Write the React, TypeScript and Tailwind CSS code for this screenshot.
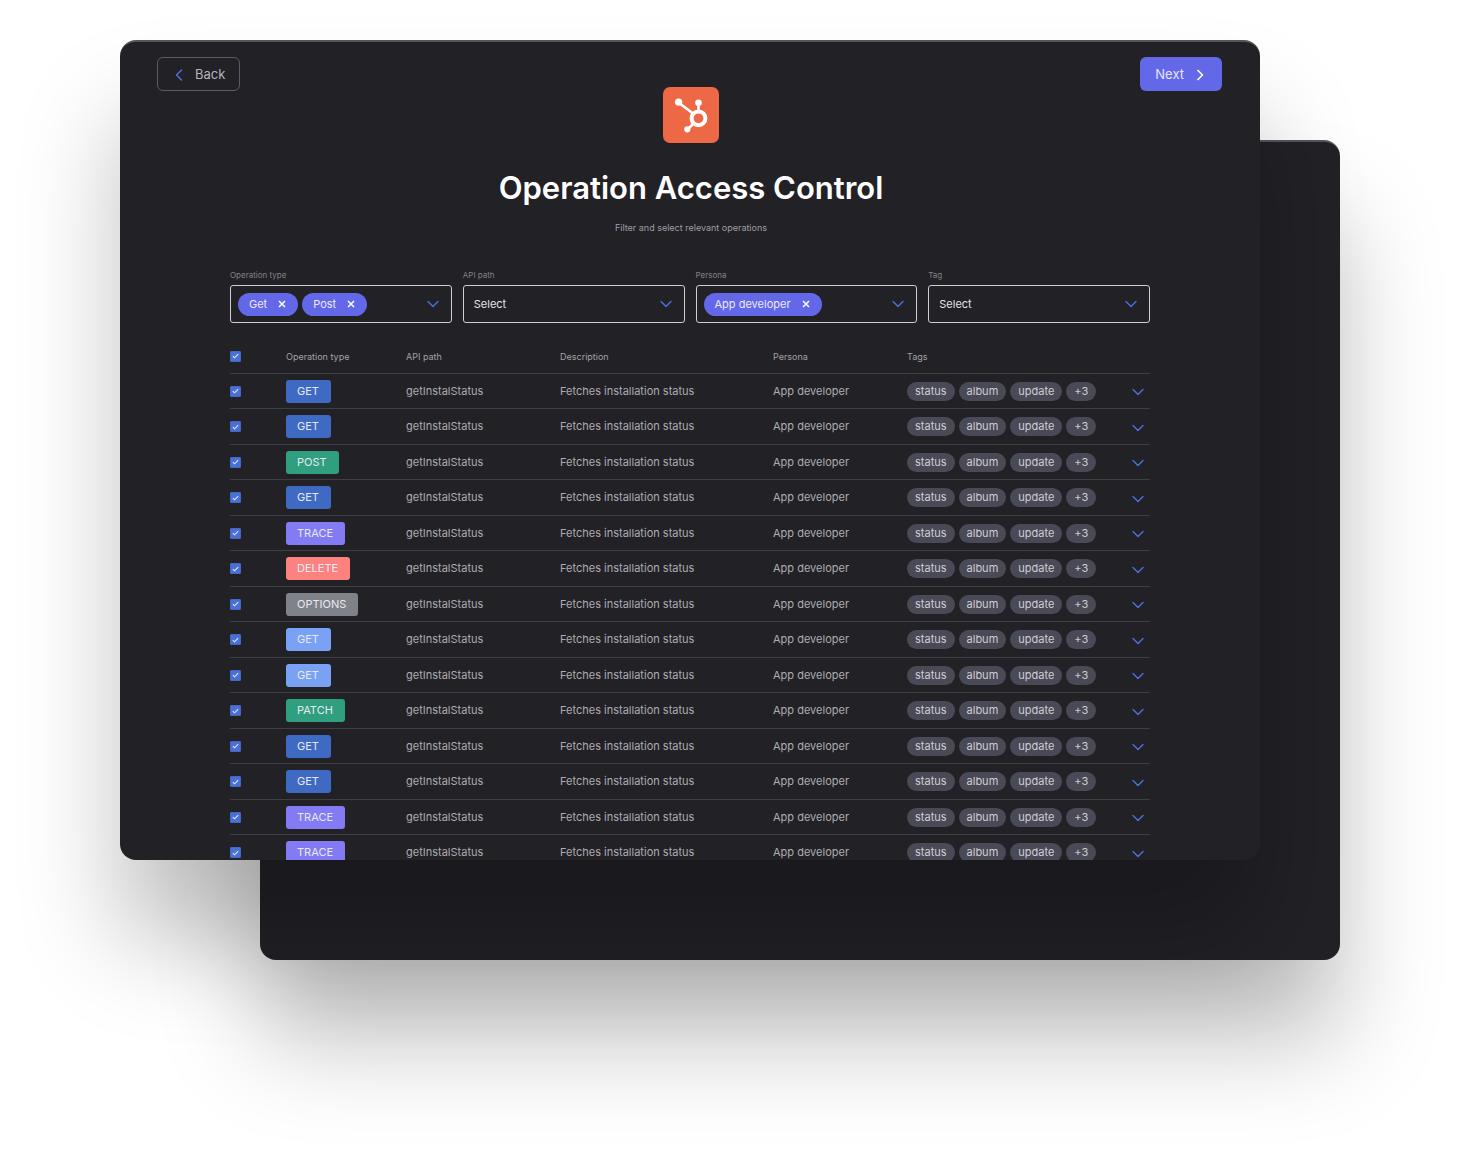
import React, { useState } from "react";

type Method = "GET" | "POST" | "TRACE" | "DELETE" | "OPTIONS" | "PATCH";

const OPERATIONS: { method: Method; tone: string }[] = [
  { method: "GET", tone: "bg-[#3e6ac4]" },
  { method: "GET", tone: "bg-[#3e6ac4]" },
  { method: "POST", tone: "bg-[#2f9f80]" },
  { method: "GET", tone: "bg-[#3e6ac4]" },
  { method: "TRACE", tone: "bg-[#837bf3]" },
  { method: "DELETE", tone: "bg-[#fb827f]" },
  { method: "OPTIONS", tone: "bg-[#808289]" },
  { method: "GET", tone: "bg-[#7aa2f4]" },
  { method: "GET", tone: "bg-[#7aa2f4]" },
  { method: "PATCH", tone: "bg-[#2f9f80]" },
  { method: "GET", tone: "bg-[#3e6ac4]" },
  { method: "GET", tone: "bg-[#3e6ac4]" },
  { method: "TRACE", tone: "bg-[#837bf3]" },
  { method: "TRACE", tone: "bg-[#837bf3]" },
];

const TAGS = ["status", "album", "update", "+3"];

function ChevronDown() {
  return (
    <svg width="12" height="8" viewBox="0 0 12 8" fill="none" stroke="#4a72dc" strokeWidth="1.4" strokeLinecap="round" strokeLinejoin="round" aria-hidden="true">
      <path d="M1 1.5 6 6.5 11 1.5" />
    </svg>
  );
}

function Checkbox({ label, checked, onChange }: { label: string; checked: boolean; onChange: () => void }) {
  return (
    <label className="grid size-[11px] cursor-pointer place-items-center">
      <input
        type="checkbox"
        aria-label={label}
        checked={checked}
        onChange={onChange}
        className="peer col-start-1 row-start-1 size-[11px] appearance-none rounded-[1px] border border-[#4467c4] checked:bg-[#4a70d6]"
      />
      <svg className="pointer-events-none invisible col-start-1 row-start-1 peer-checked:visible" width="7" height="6" viewBox="0 0 7 6" fill="none" stroke="#dfe5fa" strokeWidth="1.1" aria-hidden="true">
        <path d="M0.8 3.1 2.6 4.8 6.2 1.1" />
      </svg>
    </label>
  );
}

function Chip({ text, onRemove }: { text: string; onRemove: () => void }) {
  return (
    <span className="flex h-[23px] items-center gap-[11px] rounded-full bg-[#6268e8] pr-3 pl-[11px] text-[11px] text-[#eceaff]">
      {text}
      <button type="button" aria-label={`Remove ${text}`} onClick={onRemove}>
        <svg width="8" height="8" viewBox="0 0 8 8" stroke="#ffffff" strokeWidth="1.5" aria-hidden="true">
          <path d="M1 1 7 7M7 1 1 7" />
        </svg>
      </button>
    </span>
  );
}

function ChipField({ id, label, initial }: { id: string; label: string; initial: string[] }) {
  const [values, setValues] = useState(initial);
  return (
    <div role="group" aria-labelledby={id}>
      <div id={id} className="text-[8px] leading-[10px] text-[#83828b]">
        {label}
      </div>
      <div className="mt-[5px] flex h-[38px] items-center gap-1 rounded-[3px] border border-[#cfced6] pr-3 pl-[7px]">
        {values.map((v) => (
          <Chip key={v} text={v} onRemove={() => setValues(values.filter((x) => x !== v))} />
        ))}
        <button type="button" aria-label={`Open ${label}`} className="ml-auto">
          <ChevronDown />
        </button>
      </div>
    </div>
  );
}

function SelectField({ id, label }: { id: string; label: string }) {
  return (
    <div>
      <label htmlFor={id} className="block text-[8px] leading-[10px] text-[#83828b]">
        {label}
      </label>
      <div className="mt-[5px] grid items-center">
        <select
          id={id}
          className="col-start-1 row-start-1 h-[38px] w-full appearance-none rounded-[3px] border border-[#cfced6] bg-transparent px-2.5 text-[11px] text-[#e4e3e8]"
        >
          <option>Select</option>
        </select>
        <span className="pointer-events-none col-start-1 row-start-1 mr-[13px] justify-self-end">
          <ChevronDown />
        </span>
      </div>
    </div>
  );
}

function HubLogo() {
  return (
    <svg width="56" height="56" viewBox="0 0 56 56" role="img" aria-label="HubSpot">
      <rect width="56" height="56" rx="7" fill="#ed6945" />
      <g stroke="#ffffff" fill="none">
        <circle cx="35.5" cy="31.3" r="6.9" strokeWidth="4" />
        <path d="M35.5 24V16" strokeWidth="2.6" />
        <path d="M30 26.5 15.5 15.5" strokeWidth="2.6" />
        <path d="M30.5 36.5 25 42" strokeWidth="2.6" />
      </g>
      <g fill="#ffffff">
        <circle cx="15.6" cy="15.1" r="3.7" />
        <circle cx="35.5" cy="15.8" r="3.3" />
        <circle cx="24.3" cy="42.3" r="3.1" />
      </g>
    </svg>
  );
}

export default function App() {
  const [selected, setSelected] = useState<boolean[]>(OPERATIONS.map(() => true));
  const all = selected.every(Boolean);

  return (
    <div className="min-h-screen overflow-hidden bg-white px-[120px] pt-10 pb-[200px] font-['Inter',sans-serif]">
      <div className="grid grid-cols-[140px_minmax(0,1fr)_80px] grid-rows-[100px_720px_100px]">
        <div className="col-span-2 col-start-2 row-span-2 row-start-2 rounded-2xl border-t-2 border-[#55555d] bg-[#222126] shadow-[0_80px_100px_rgba(0,0,0,0.25)]" />

        <main className="col-span-2 col-start-1 row-span-2 row-start-1 overflow-hidden rounded-2xl border-t-2 border-[#55555d] bg-[#222126] shadow-[0_80px_100px_rgba(0,0,0,0.25)]">
          <header className="flex justify-between pt-[15px] pr-[38px] pl-[37px]">
            <button type="button" className="flex h-[34px] items-center gap-3 rounded-md border border-[#5c5b65] pt-px pr-3.5 pl-[17px] text-[13px] text-[#b5b4bb]">
              <svg width="8" height="12" viewBox="0 0 8 12" fill="none" stroke="#4a72dc" strokeWidth="1.5" strokeLinecap="round" strokeLinejoin="round" aria-hidden="true">
                <path d="M6.5 1 1.5 6 6.5 11" />
              </svg>
              Back
            </button>
            <button type="button" className="flex h-[34px] items-center gap-3 rounded-md bg-[#6268e8] pt-px pr-[18px] pl-[15px] text-[13px] text-[#e6e5ff]">
              Next
              <svg width="8" height="12" viewBox="0 0 8 12" fill="none" stroke="#ffffff" strokeWidth="1.6" strokeLinejoin="round" aria-hidden="true">
                <path d="M1.5 1 6.5 6 1.5 11" />
              </svg>
            </button>
          </header>

          <div className="-mt-1 flex flex-col items-center pl-0.5">
            <HubLogo />
            <h1 className="mt-[25px] text-[31px] leading-[40px] font-semibold text-white">Operation Access Control</h1>
            <p className="mt-3.5 text-[9px] leading-[12px] text-[#9f9ea6]">Filter and select relevant operations</p>
          </div>

          <div className="mx-[110px] mt-9">
            <div className="grid grid-cols-4 gap-[11px]">
              <ChipField id="f-type" label="Operation type" initial={["Get", "Post"]} />
              <SelectField id="f-path" label="API path" />
              <ChipField id="f-persona" label="Persona" initial={["App developer"]} />
              <SelectField id="f-tag" label="Tag" />
            </div>

            <table className="mt-[17px] w-full table-fixed border-collapse text-left text-[11px] text-[#adacb3]">
              <colgroup>
                <col className="w-[56px]" />
                <col className="w-[120px]" />
                <col className="w-[154px]" />
                <col className="w-[213px]" />
                <col className="w-[134px]" />
                <col />
                <col className="w-8" />
              </colgroup>
              <thead>
                <tr className="h-[33px] border-b border-[#3f3e45] text-[9px] text-[#a3a2a9]">
                  <th className="p-0">
                    <Checkbox label="Select all operations" checked={all} onChange={() => setSelected(selected.map(() => !all))} />
                  </th>
                  <th className="p-0 font-normal">Operation type</th>
                  <th className="p-0 font-normal">API path</th>
                  <th className="p-0 font-normal">Description</th>
                  <th className="p-0 font-normal">Persona</th>
                  <th className="p-0 font-normal">Tags</th>
                  <th className="p-0" aria-label="Details" />
                </tr>
              </thead>
              <tbody>
                {OPERATIONS.map((op, i) => (
                  <tr key={i} className="border-b border-[#3f3e45] odd:h-[35px] even:h-[36px]">
                    <td className="pt-px">
                      <Checkbox
                        label={`Select operation ${i + 1}`}
                        checked={selected[i]}
                        onChange={() => setSelected(selected.map((s, j) => (j === i ? !s : s)))}
                      />
                    </td>
                    <td className="pt-px">
                      <span className={`inline-flex h-[23px] items-center rounded-[3px] pr-3 pl-[11px] align-middle text-[#e9e9f6] ${op.tone}`}>{op.method}</span>
                    </td>
                    <td className="pt-px">getInstalStatus</td>
                    <td className="pt-px">Fetches installation status</td>
                    <td className="pt-px">App developer</td>
                    <td className="pt-px">
                      <div className="flex gap-1">
                        {TAGS.map((t) => (
                          <span key={t} className="flex h-[19px] items-center rounded-full bg-[#4a4956] px-2 text-[#cfced4]">
                            {t}
                          </span>
                        ))}
                      </div>
                    </td>
                    <td className="pt-px">
                      <button type="button" aria-label={`Expand operation ${i + 1}`} className="mr-1.5 ml-auto block pt-0.5">
                        <ChevronDown />
                      </button>
                    </td>
                  </tr>
                ))}
              </tbody>
            </table>
          </div>
        </main>
      </div>
    </div>
  );
}
